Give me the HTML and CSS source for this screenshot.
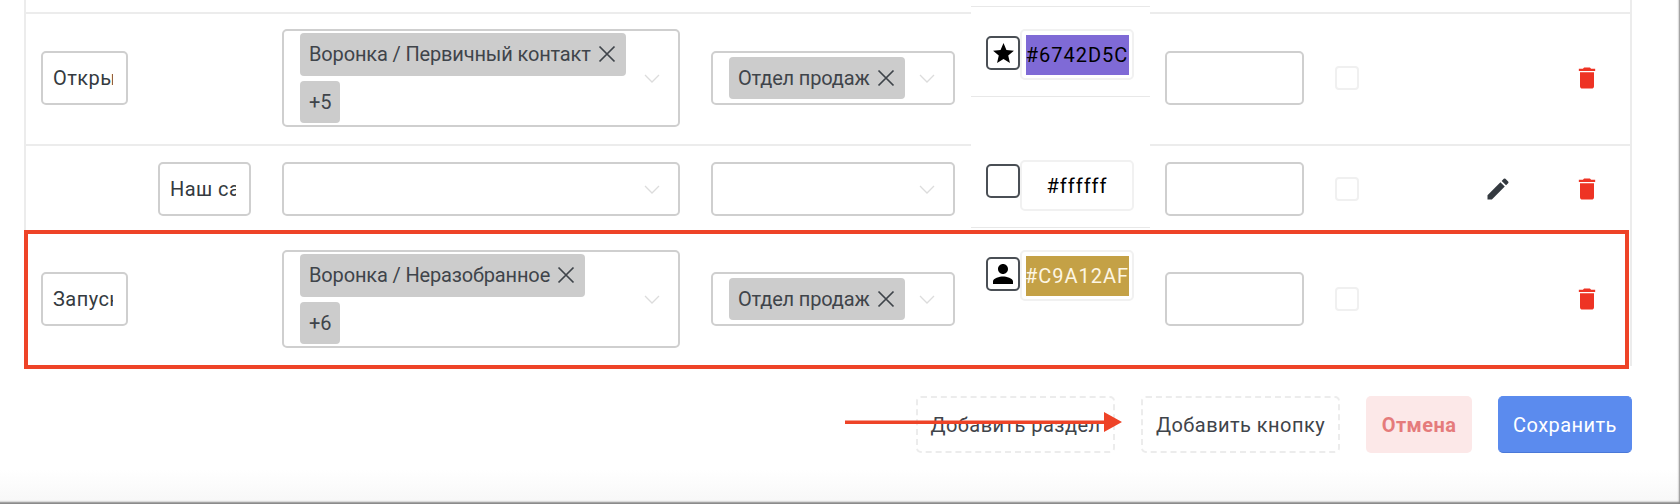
FILE: index.html
```html
<!DOCTYPE html>
<html>
<head>
<meta name="viewport" content="width=device-width, initial-scale=1">
<link rel="stylesheet" href="styles.css">
</head>
<body>

<div class="page">
  <div class="table">
    <div class="row-stub"></div>

    <div class="row row-first">
      <div class="name-cell"><input class="name-input" value="Открыть"></div>
      <div class="select tags-select">
        <div class="tags">
          <span class="tag">Воронка / Первичный контакт <svg class="tag-x" viewBox="0 0 16 16"><path d="M2 2l12 12M14 2L2 14"/></svg></span>
          <span class="tag">+5</span>
        </div>
        <svg class="chevron" viewBox="0 0 16 9"><path d="M1 1l7 7 7-7"/></svg>
      </div>
      <div class="select dept-select">
        <div class="tags">
          <span class="tag">Отдел продаж <svg class="tag-x" viewBox="0 0 16 16"><path d="M2 2l12 12M14 2L2 14"/></svg></span>
        </div>
        <svg class="chevron" viewBox="0 0 16 9"><path d="M1 1l7 7 7-7"/></svg>
      </div>
      <input class="num-input">
      <span class="check"></span>
      <div class="edit-cell"></div>
      <svg class="trash" viewBox="0 0 24 24"><path d="M6 19c0 1.1.9 2 2 2h8c1.1 0 2-.9 2-2V7H6v12zM19 4h-3.5l-1-1h-5l-1 1H5v2h14V4z"/></svg>
    </div>

    <div class="row row-second">
      <div class="name-cell sub"><input class="name-input sub-input" value="Наш сайт"></div>
      <div class="select tags-select">
        <div class="tags"></div>
        <svg class="chevron" viewBox="0 0 16 9"><path d="M1 1l7 7 7-7"/></svg>
      </div>
      <div class="select dept-select">
        <div class="tags"></div>
        <svg class="chevron" viewBox="0 0 16 9"><path d="M1 1l7 7 7-7"/></svg>
      </div>
      <input class="num-input">
      <span class="check"></span>
      <div class="edit-cell">
        <svg class="pencil" viewBox="0 0 24 24"><path d="M3 17.25V21h3.75L17.81 9.94l-3.75-3.75L3 17.25zM20.71 7.04a1 1 0 0 0 0-1.41l-2.34-2.34a1 1 0 0 0-1.41 0l-1.83 1.83 3.75 3.75 1.83-1.83z"/></svg>
      </div>
      <svg class="trash" viewBox="0 0 24 24"><path d="M6 19c0 1.1.9 2 2 2h8c1.1 0 2-.9 2-2V7H6v12zM19 4h-3.5l-1-1h-5l-1 1H5v2h14V4z"/></svg>
    </div>

    <div class="row row-third">
      <div class="name-cell"><input class="name-input" value="Запуск воронки"></div>
      <div class="select tags-select">
        <div class="tags">
          <span class="tag">Воронка / Неразобранное <svg class="tag-x" viewBox="0 0 16 16"><path d="M2 2l12 12M14 2L2 14"/></svg></span>
          <span class="tag">+6</span>
        </div>
        <svg class="chevron" viewBox="0 0 16 9"><path d="M1 1l7 7 7-7"/></svg>
      </div>
      <div class="select dept-select">
        <div class="tags">
          <span class="tag">Отдел продаж <svg class="tag-x" viewBox="0 0 16 16"><path d="M2 2l12 12M14 2L2 14"/></svg></span>
        </div>
        <svg class="chevron" viewBox="0 0 16 9"><path d="M1 1l7 7 7-7"/></svg>
      </div>
      <input class="num-input">
      <span class="check"></span>
      <div class="edit-cell"></div>
      <svg class="trash" viewBox="0 0 24 24"><path d="M6 19c0 1.1.9 2 2 2h8c1.1 0 2-.9 2-2V7H6v12zM19 4h-3.5l-1-1h-5l-1 1H5v2h14V4z"/></svg>
    </div>

    <!-- colour column sits over the rows -->
    <div class="color-strip">
      <div class="color-cell cell-a">
        <span class="icon-box"><svg viewBox="0 0 24 24"><path d="M12 17.27L18.18 21l-1.64-7.03L22 9.24l-7.19-.61L12 2 9.19 8.63 2 9.24l5.46 4.73L5.82 21z"/></svg></span>
        <div class="hex"><span class="hex-fill purple">#6742D5C</span></div>
      </div>
      <div class="color-cell cell-b">
        <span class="icon-box icon-high"></span>
        <div class="hex"><span class="hex-fill">#ffffff</span></div>
      </div>
      <div class="color-cell cell-c">
        <span class="icon-box"><svg class="person" viewBox="0 0 24 24"><path d="M12 12c2.21 0 4-1.79 4-4s-1.79-4-4-4-4 1.79-4 4 1.79 4 4 4zm0 2c-2.67 0-8 1.34-8 4v2h16v-2c0-2.66-5.33-4-8-4z"/></svg></span>
        <div class="hex"><span class="hex-fill gold">#C9A12AF</span></div>
      </div>
    </div>
  </div>

  <div class="buttons">
    <button class="btn btn-add">Добавить раздел</button>
    <button class="btn btn-add">Добавить кнопку</button>
    <button class="btn btn-cancel">Отмена</button>
    <button class="btn btn-save">Сохранить</button>
  </div>

  <!-- annotation drawn over the screenshot -->
  <div class="red-box"></div>
  <svg class="arrow" viewBox="0 0 277 20"><path d="M0 8.5h259v-8.5l18 10-18 10v-8h-259z"/></svg>
</div>

</body>
</html>
```

FILE: styles.css
```css
* {
  box-sizing: border-box;
}

body {
  margin: 0;
  background: white;
  font-family: "Roboto", "Noto Sans", sans-serif;
  font-size: 20px;
  letter-spacing: 0.45px;
  color: #3f444a;
}

.page {
  position: relative;
  height: 504px;
  padding-left: 24px;
  overflow: hidden;
  background: linear-gradient(to bottom, white 470px, #f8f8f8 500px);
  box-shadow: inset -2px -3px 2px -1px #858585;
}

/* Table */
.table {
  position: relative;
  width: 1608px;
  height: 366px;
  border-left: 2px solid #ececec;
  border-right: 2px solid #ececec;
  background: white;
}

.row-stub {
  height: 12px;
}

.row {
  display: flex;
  align-items: center;
  border-top: 2px solid #ececec;
}

.row-first {
  height: 132px;
  padding-bottom: 2px;
}

.row-second {
  height: 88px;
}

.row-third {
  height: 134px;
  border-top: 0;
}

.name-cell {
  width: 256px;
  padding-left: 15px;
}

.name-cell.sub {
  padding-left: 132px;
}

.name-input {
  display: block;
  width: 87px;
  height: 54px;
  padding: 0 13px 0 10px;
  border: 2px solid #cfcfcf;
  border-radius: 5px;
  background: white;
  font: inherit;
  letter-spacing: inherit;
  color: #343a40;
}

.sub-input {
  width: 93px;
}

/* Selects */
.select {
  display: flex;
  align-items: center;
  border: 2px solid #cfcfcf;
  border-radius: 5px;
  background: white;
}

.tags-select {
  width: 398px;
  min-height: 54px;
  padding: 2px 0 2px 16px;
}

.dept-select {
  width: 244px;
  height: 54px;
  margin-left: 31px;
  padding-left: 16px;
}

.tags {
  display: flex;
  flex-direction: column;
  align-items: flex-start;
  flex: 1;
  gap: 5px;
}

.tag {
  display: flex;
  align-items: center;
  gap: 6px;
  height: 42.5px;
  padding: 0 9px;
  border-radius: 4px;
  background: #cccccc;
  letter-spacing: -0.15px;
  white-space: nowrap;
}

.tag-x {
  width: 20px;
  height: 20px;
  fill: none;
  stroke: #3f444a;
  stroke-width: 1.4;
}

.chevron {
  flex: none;
  width: 16px;
  height: 9px;
  margin: 0 18px 0 8px;
  fill: none;
  stroke: #dcdcdc;
  stroke-width: 1.3;
}

.num-input {
  width: 139px;
  height: 54px;
  margin-left: 210px;
  border: 2px solid #cfcfcf;
  border-radius: 5px;
  background: white;
}

.check {
  width: 24px;
  height: 24px;
  margin-left: 31px;
  border: 2px solid #f0f0f0;
  border-radius: 4px;
}

.edit-cell {
  display: flex;
  justify-content: flex-end;
  width: 153px;
}

.pencil {
  width: 28px;
  height: 28px;
  fill: #343a40;
}

.trash {
  width: 28px;
  height: 28px;
  margin-left: 61px;
  fill: #ee3324;
}

/* Colour column */
.color-strip {
  position: absolute;
  left: 945px;
  top: 6px;
  width: 179px;
  height: 360px;
  background: white;
}

.color-cell {
  display: flex;
  align-items: flex-start;
  padding-left: 15px;
  border-top: 1px solid #e8e8e8;
}

.cell-a {
  height: 90px;
  padding-top: 22px;
}

.cell-b {
  height: 131px;
  padding-top: 63px;
}

.cell-c {
  padding-top: 22px;
}

.icon-box {
  display: flex;
  align-items: center;
  justify-content: center;
  flex: none;
  width: 34px;
  height: 34px;
  margin-top: 7px;
  border: 2px solid #4a4f55;
  border-radius: 5px;
  background: white;
}

.icon-high {
  margin-top: 4px;
}

.icon-box svg {
  width: 25px;
  height: 25px;
  fill: black;
}

.icon-box .person {
  width: 32px;
  height: 32px;
}

.hex {
  display: flex;
  align-items: center;
  justify-content: center;
  width: 114px;
  height: 51px;
  border: 2px solid #f1f1f1;
  border-radius: 5px;
  letter-spacing: 1px;
  color: black;
}

.hex-fill {
  display: flex;
  align-items: center;
  justify-content: center;
  width: 103px;
  height: 40px;
}

.purple {
  background: #7f6ad6;
}

.gold {
  background: #c4a146;
  color: #fdf6e3;
}

/* Buttons */
.buttons {
  display: flex;
  justify-content: flex-end;
  gap: 26px;
  width: 1608px;
  margin-top: 30px;
}

.btn {
  height: 57px;
  padding: 0;
  border-radius: 5px;
  font: inherit;
  letter-spacing: inherit;
}

.btn-add {
  width: 199px;
  border: 2px dashed #ececec;
  background: white;
  color: #3f444a;
}

.btn-cancel {
  width: 106px;
  border: 0;
  background: #fce8e8;
  color: #e57b7b;
  font-weight: bold;
}

.btn-save {
  width: 134px;
  border: 1px solid #5b8bee;
  border-bottom-color: #4a78d8;
  background: #5b8bee;
  color: white;
}

/* Annotation */
.red-box {
  position: absolute;
  left: 24px;
  top: 230px;
  width: 1605px;
  height: 139px;
  border: 4px solid #ee4327;
}

.arrow {
  position: absolute;
  left: 845px;
  top: 412px;
  width: 277px;
  height: 20px;
  fill: #ee4327;
}
```
